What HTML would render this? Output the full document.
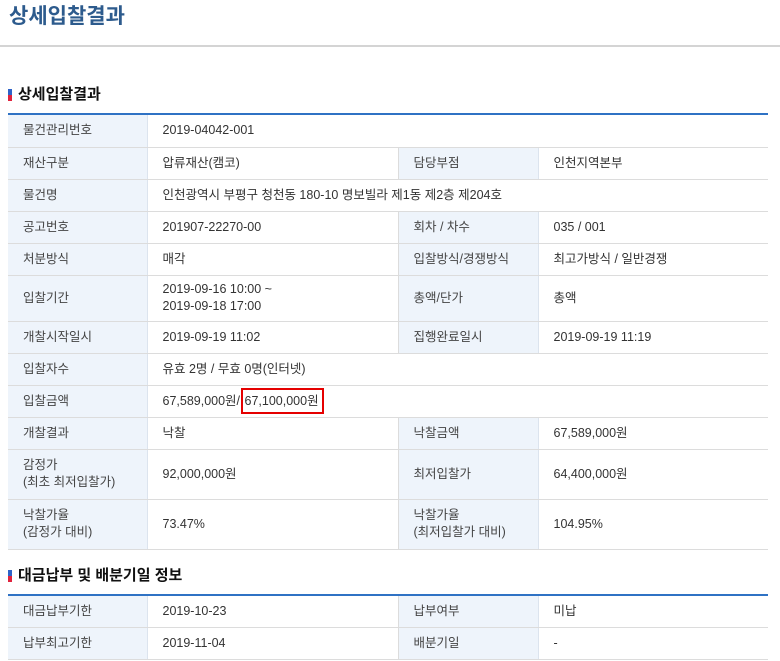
<!DOCTYPE html>
<html><head><meta charset="utf-8"><style>
*{margin:0;padding:0;box-sizing:border-box}
body{width:780px;height:661px;background:#fff;font-family:"Liberation Sans","Noto Sans CJK KR",sans-serif;color:#333;overflow:hidden;position:relative}
h1{position:absolute;left:9px;top:3px;font-size:21px;font-weight:bold;color:#2d5b8d;line-height:28px}
.hr{position:absolute;left:0;top:45px;width:780px;height:2px;background:#d4d4d4}
h2{position:absolute;left:8px;font-size:15px;font-weight:bold;color:#111;line-height:20px;padding-left:10px}
h2:before{content:"";position:absolute;left:0;top:4px;width:4px;height:6px;background:#2e63c8}
h2:after{content:"";position:absolute;left:0;top:10px;width:4px;height:6px;background:#e0233d}
table{position:absolute;left:8px;width:760px;border-collapse:collapse;border-top:2px solid #2f72c4;font-size:12.5px}
td{border-bottom:1px solid #dcdcdc;padding:0 0 0 15px;line-height:17px;vertical-align:middle}
td.l{background:#eef4fb;color:#444;border-right:1px solid #dce4ee}
td.v{border-right:1px solid #dcdcdc}
td.v:last-child{border-right:none}
.box{border:2px solid #e50000;padding:4px 3px 4px 2px;margin-left:-3px}
</style></head><body>
<h1>상세입찰결과</h1>
<div class="hr"></div>
<h2 style="top:85px">상세입찰결과</h2>
<table style="top:113px">
<colgroup><col style="width:139px"><col style="width:251px"><col style="width:140px"><col></colgroup>
<tr style="height:33px"><td class="l">물건관리번호</td><td colspan="3">2019-04042-001</td></tr>
<tr style="height:32px"><td class="l">재산구분</td><td class="v">압류재산(캠코)</td><td class="l">담당부점</td><td>인천지역본부</td></tr>
<tr style="height:32px"><td class="l">물건명</td><td colspan="3">인천광역시 부평구 청천동 180-10 명보빌라 제1동 제2층 제204호</td></tr>
<tr style="height:32px"><td class="l">공고번호</td><td class="v">201907-22270-00</td><td class="l">회차 / 차수</td><td>035 / 001</td></tr>
<tr style="height:32px"><td class="l">처분방식</td><td class="v">매각</td><td class="l">입찰방식/경쟁방식</td><td>최고가방식 / 일반경쟁</td></tr>
<tr style="height:46px"><td class="l">입찰기간</td><td class="v">2019-09-16 10:00 ~<br>2019-09-18 17:00</td><td class="l">총액/단가</td><td>총액</td></tr>
<tr style="height:32px"><td class="l">개찰시작일시</td><td class="v">2019-09-19 11:02</td><td class="l">집행완료일시</td><td>2019-09-19 11:19</td></tr>
<tr style="height:32px"><td class="l">입찰자수</td><td colspan="3">유효 2명 / 무효 0명(인터넷)</td></tr>
<tr style="height:32px"><td class="l">입찰금액</td><td colspan="3">67,589,000원/ <span class="box">67,100,000원</span></td></tr>
<tr style="height:32px"><td class="l">개찰결과</td><td class="v">낙찰</td><td class="l">낙찰금액</td><td>67,589,000원</td></tr>
<tr style="height:50px"><td class="l">감정가<br>(최초 최저입찰가)</td><td class="v">92,000,000원</td><td class="l">최저입찰가</td><td>64,400,000원</td></tr>
<tr style="height:50px"><td class="l">낙찰가율<br>(감정가 대비)</td><td class="v">73.47%</td><td class="l">낙찰가율<br>(최저입찰가 대비)</td><td>104.95%</td></tr>
</table>
<h2 style="top:566px">대금납부 및 배분기일 정보</h2>
<table style="top:594px">
<colgroup><col style="width:139px"><col style="width:251px"><col style="width:140px"><col></colgroup>
<tr style="height:32px"><td class="l">대금납부기한</td><td class="v">2019-10-23</td><td class="l">납부여부</td><td>미납</td></tr>
<tr style="height:32px"><td class="l">납부최고기한</td><td class="v">2019-11-04</td><td class="l">배분기일</td><td>-</td></tr>
</table>
</body></html>
